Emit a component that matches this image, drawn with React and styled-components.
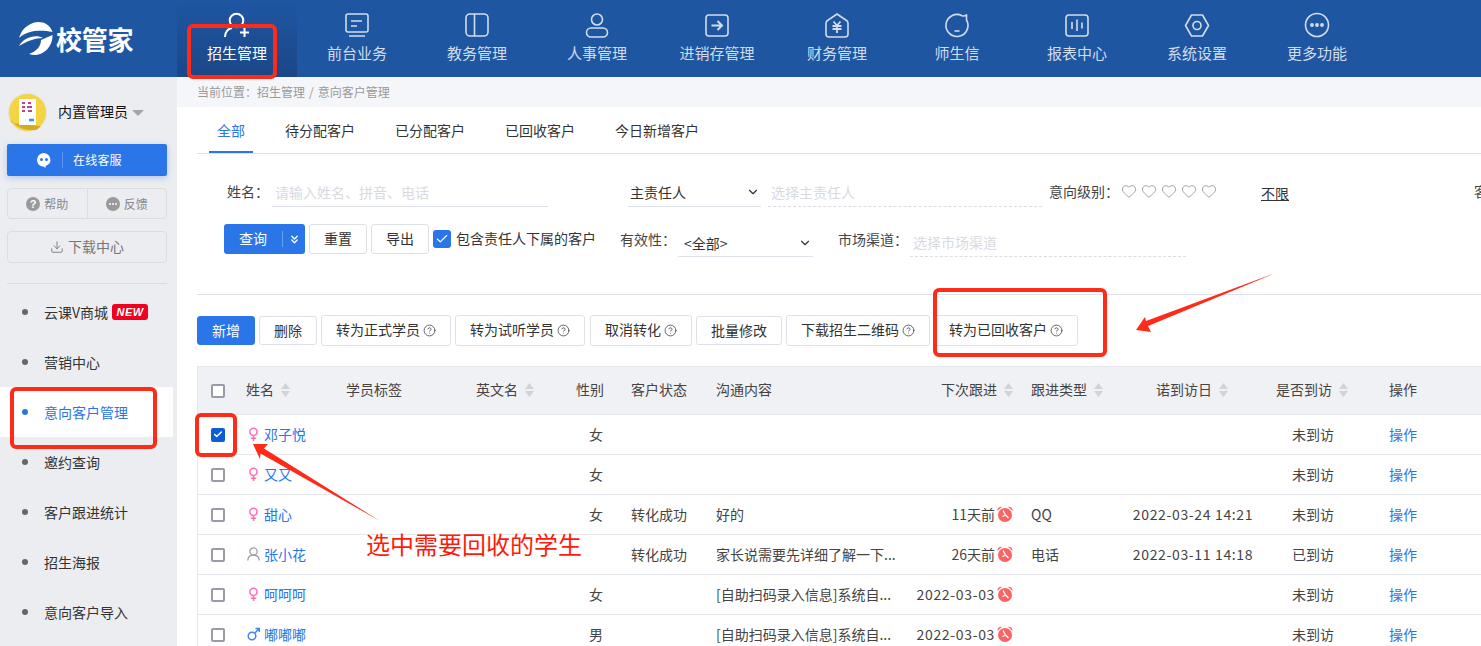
import React from "react";
import styled, { createGlobalStyle } from "styled-components";
import { Check, ChevronDown, ChevronsDown, CircleHelp, Download, Heart } from "lucide-react";

const BLUE = "#2a75e8";
const LINE = "#dfe1e8";

const GlobalStyle = createGlobalStyle`
  html, body {
    margin: 0;
    height: 100%;
    overflow: hidden;
    background: #fff;
  }
  body {
    font-family: "Noto Sans CJK SC", "Liberation Sans", sans-serif;
    font-size: 14px;
    color: #333;
  }
  * { box-sizing: border-box; }
`;

const NavIcon = ({ name }) => {
  const shapes = {
    enroll: (
      <>
        <circle cx="11.500" cy="7.500" r="6.800" strokeWidth="2" />
        <path d="M0 24c0-5 3-8 7-9M15 19.500h9M19.500 15v9" strokeWidth="2" />
      </>
    ),
    desk: (
      <>
        <rect x="1" y="1" width="22" height="18" rx="2" />
        <path d="M4 23h16M6 8h11M6 13h6" />
      </>
    ),
    edu: (
      <>
        <rect x="1" y="1" width="22" height="22" rx="4" />
        <path d="M9.500 1v22" />
      </>
    ),
    hr: (
      <>
        <circle cx="12" cy="6.500" r="5.500" />
        <rect x="1.500" y="15" width="21" height="9" rx="4.500" />
      </>
    ),
    stock: (
      <>
        <rect x="1" y="2" width="22" height="21" rx="3" />
        <path d="M6.500 12.500h10M12.500 8l4.500 4.500-4.500 4.500" strokeWidth="2" />
      </>
    ),
    money: (
      <>
        <path d="M12 1l9.500 6.500c1 .7 1.500 1.500 1.500 2.700V21c0 1.700-1 3-3 3H4c-2 0-3-1.300-3-3V10.200c0-1.200.5-2 1.500-2.700z" />
        <path d="M8.500 8.500L12 12.500l3.500-4M7.500 13h9M7.500 16h9M12 12.500V20" strokeWidth="1.800" />
      </>
    ),
    chat: (
      <>
        <path d="M21.500 7A11 11 0 1 1 17 2.700C18.500 3.200 20 3 21.500 1.800z" strokeLinejoin="round" />
        <path d="M9.500 18h5" />
      </>
    ),
    report: (
      <>
        <rect x="1" y="2" width="22" height="21" rx="3" />
        <path d="M7 9v7M12 6.500v11.500M17 9.500v6" />
      </>
    ),
    setting: (
      <>
        <path d="M6.500 2h11L23.500 12.500 17.500 23h-11L.5 12.500z" strokeLinejoin="round" />
        <circle cx="12" cy="12.500" r="4" />
      </>
    ),
    more: (
      <>
        <circle cx="12" cy="12" r="11.500" />
        <circle cx="7" cy="12" r="1.100" fill="currentColor" />
        <circle cx="12" cy="12" r="1.100" fill="currentColor" />
        <circle cx="17" cy="12" r="1.100" fill="currentColor" />
      </>
    ),
  };
  return (
    <NavSvg width="24" height="24" viewBox="0 0 24 24" fill="none" stroke="currentColor" strokeWidth="1.600">
      {shapes[name]}
    </NavSvg>
  );
};

const LogoMark = () => (
  <svg width="34" height="33" viewBox="0 0 34 33" fill="#fff">
    <path d="M0 16C3 5 13 0 19 0c7 0 12 3 14.500 10C24 8.500 10 7 0 16z" />
    <path d="M0 24C5 15 17 12 24 16 16 16 8 19 0 24z" />
    <path d="M10 32c8-3 12-8 12-14l11.500-5C34 24 25 33 16 33c-2 0-4-.3-6-1z" />
  </svg>
);

const AvatarArt = () => (
  <svg width="39" height="39" viewBox="0 0 39 39">
    <circle cx="19.500" cy="19.500" r="19" fill="#f5d443" stroke="#e4e4e4" />
    <path d="M2 26c6 8 14 12 26 11 2-1 3-2 5-4L4 30z" fill="#d6ab22" />
    <rect x="11" y="6" width="17" height="26" fill="#fff" />
    <path d="M14 10h3M20 10h3M14 14h3M19 14h5M14 18h3M20 18h4" stroke="#c2408e" strokeWidth="2" />
    <path d="M21 27h5" stroke="#2a9fd8" strokeWidth="2.500" />
  </svg>
);

const ServiceIcon = () => (
  <svg width="16" height="16" viewBox="0 0 16 16">
    <path d="M8 1a7 7 0 0 0-7 7c0 3.800 3 6.500 6.500 6.500l2 1.500v-2c3-1 5-3.200 5-6A7 7 0 0 0 8 1z" fill="#fff" />
    <circle cx="5.500" cy="7.500" r="1.500" fill={BLUE} />
    <circle cx="10.500" cy="7.500" r="1.500" fill={BLUE} />
  </svg>
);

const FeedbackIcon = () => (
  <svg width="14" height="14" viewBox="0 0 14 14">
    <circle cx="7" cy="7" r="7" fill="#999" />
    <circle cx="4" cy="7" r="1" fill="#fff" />
    <circle cx="7" cy="7" r="1" fill="#fff" />
    <circle cx="10" cy="7" r="1" fill="#fff" />
  </svg>
);

const GenderIcon = ({ type }) => {
  if (type === "male") {
    return (
      <svg width="13" height="14" viewBox="0 0 13 14" fill="none" stroke="#3f87e6" strokeWidth="1.500">
        <circle cx="5" cy="9" r="3.800" />
        <path d="M8 6l4-4.500M8.500 1.500H12.300V5" />
      </svg>
    );
  }
  if (type === "user") {
    return (
      <svg width="13" height="14" viewBox="0 0 13 14" fill="none" stroke="#9a9aa5" strokeWidth="1.200">
        <circle cx="6.500" cy="4.500" r="3.600" />
        <path d="M.8 13.500c0-3.500 2.500-5.400 5.700-5.400s5.700 1.900 5.700 5.400" />
      </svg>
    );
  }
  return (
    <svg width="13" height="14" viewBox="0 0 13 14" fill="none" stroke="#ff6db4" strokeWidth="1.500">
      <circle cx="6.500" cy="4.800" r="3.600" />
      <path d="M6.500 8.500V14M3.800 11.300h5.400" />
    </svg>
  );
};

const AlarmIcon = () => (
  <svg width="16" height="16" viewBox="0 0 16 16">
    <circle cx="8" cy="9" r="7" fill="#fa6464" />
    <path d="M.2 5C.4 2 2.500.4 5.200.8zM15.800 5C15.600 2 13.500.4 10.800.8z" fill="#fa6464" />
    <path d="M6 4.500L8.500 9l3 3M8.500 9L5.500 10.500" stroke="#fff" strokeWidth="1.300" fill="none" />
  </svg>
);

const SortIcon = () => (
  <SortMark width="9" height="14" viewBox="0 0 9 14">
    <path d="M4.500 0L9 6H0zM4.500 14L0 8h9z" fill="#d2d3d8" />
  </SortMark>
);

const Annotations = () => (
  <Overlay width="1481" height="646" viewBox="0 0 1481 646">
    <polygon points="253,444 268,444 264,448.400 380,521 260.500,453.600 260,459" fill="#ff2a17" />
    <polygon points="1136,330 1145,317 1146,321 1273,274 1148,326 1151,332" fill="#ff2a17" />
  </Overlay>
);

const navItems = [
  ["enroll", "招生管理"],
  ["desk", "前台业务"],
  ["edu", "教务管理"],
  ["hr", "人事管理"],
  ["stock", "进销存管理"],
  ["money", "财务管理"],
  ["chat", "师生信"],
  ["report", "报表中心"],
  ["setting", "系统设置"],
  ["more", "更多功能"],
];

const menuItems = ["云课V商城", "营销中心", "意向客户管理", "邀约查询", "客户跟进统计", "招生海报", "意向客户导入"];
const tabs = ["全部", "待分配客户", "已分配客户", "已回收客户", "今日新增客户"];
const SCAN = "[自助扫码录入信息]系统自...";

const rows = [
  { name: "邓子悦", gender: "female", sex: "女", visit: "未到访", checked: true },
  { name: "又又", gender: "female", sex: "女", visit: "未到访" },
  { name: "甜心", gender: "female", sex: "女", status: "转化成功", note: "好的", next: "11天前", type: "QQ", date: "2022-03-24 14:21", visit: "未到访" },
  { name: "张小花", gender: "user", status: "转化成功", note: "家长说需要先详细了解一下...", next: "26天前", type: "电话", date: "2022-03-11 14:18", visit: "已到访" },
  { name: "呵呵呵", gender: "female", sex: "女", note: SCAN, next: "2022-03-03", nextIsDate: true, visit: "未到访" },
  { name: "嘟嘟嘟", gender: "male", sex: "男", note: SCAN, next: "2022-03-03", nextIsDate: true, visit: "未到访" },
];

const colWidths = [38, 100, 130, 100, 55, 85, 205, 110, 99, 146, 92, 124];

const actions = [
  { label: "新增", primary: true },
  { label: "删除" },
  { label: "转为正式学员", help: true },
  { label: "转为试听学员", help: true },
  { label: "取消转化", help: true, gapLeft: 1 },
  { label: "批量修改" },
  { label: "下载招生二维码", help: true },
  { label: "转为已回收客户", help: true },
];

export default function App() {
  return (
    <Page>
      <GlobalStyle />
      <Header>
        <LogoBox>
          <LogoMark />
          <LogoText>校管家</LogoText>
        </LogoBox>
        <Nav>
          {navItems.map(([icon, label], i) => (
            <NavItem key={label} $active={i === 0}>
              <NavIcon name={icon} />
              <NavLabel>{label}</NavLabel>
            </NavItem>
          ))}
        </Nav>
      </Header>

      <Body>
        <Sidebar>
          <UserRow>
            <AvatarArt />
            <UserName>内置管理员</UserName>
            <Caret />
          </UserRow>
          <ServiceButton>
            <ServiceIcon />
            <ServiceDivider />
            <ServiceText>在线客服</ServiceText>
          </ServiceButton>
          <HelpGroup>
            <HelpItem>
              <HelpDot>?</HelpDot>帮助
            </HelpItem>
            <HelpItem>
              <FeedbackIcon />反馈
            </HelpItem>
          </HelpGroup>
          <DownloadButton>
            <Download size={14} strokeWidth={1.500} />
            <DownloadText>下载中心</DownloadText>
          </DownloadButton>
          <SideDivider />
          <Menu>
            {menuItems.map((item, i) => (
              <MenuItem key={item} $active={i === 2}>
                <MenuDot $active={i === 2} />
                {item}
                {i === 0 && <NewBadge>NEW</NewBadge>}
              </MenuItem>
            ))}
          </Menu>
        </Sidebar>

        <Main>
          <Breadcrumb>
            当前位置：招生管理<Slash>/</Slash>意向客户管理
          </Breadcrumb>
          <Content>
            <Tabs>
              {tabs.map((tab, i) => (
                <Tab key={tab} $active={i === 0}>
                  {tab}
                </Tab>
              ))}
            </Tabs>

            <FilterRow>
              <FieldLabel $width={45}>姓名：</FieldLabel>
              <TextField $width={276} placeholder="请输入姓名、拼音、电话" readOnly />
              <SelectField $width={133} $pad={2} $left={80}>
                主责任人
                <ChevronDown size={14} strokeWidth={2} />
              </SelectField>
              <TextField $width={274} $dashed $left={7} placeholder="选择主责任人" readOnly />
              <FieldLabel $width={72} $left={7}>意向级别：</FieldLabel>
              <Hearts>
                {[0, 1, 2, 3, 4].map((n) => (
                  <Heart key={n} size={16} strokeWidth={1} color="#777" />
                ))}
              </Hearts>
              <Unlimited>不限</Unlimited>
              <FieldLabel $width={60} $left={185}>客户</FieldLabel>
            </FilterRow>

            <QueryRow>
              <SplitButton>
                <SplitMain>查询</SplitMain>
                <SplitArrow>
                  <ChevronsDown size={13} strokeWidth={2.500} />
                </SplitArrow>
              </SplitButton>
              <PlainButton>重置</PlainButton>
              <PlainButton>导出</PlainButton>
              <CheckBadge>
                <Check size={14} strokeWidth={2} />
              </CheckBadge>
              <CheckLabel>包含责任人下属的客户</CheckLabel>
              <LowerFields>
                <FieldLabel $width={58}>有效性：</FieldLabel>
                <SelectField $width={135} $pad={6} $low>
                  &lt;全部&gt;
                  <ChevronDown size={14} strokeWidth={2} />
                </SelectField>
                <FieldLabel $width={72} $left={25}>市场渠道：</FieldLabel>
                <TextField $width={276} $dashed placeholder="选择市场渠道" readOnly />
              </LowerFields>
            </QueryRow>

            <SectionLine />

            <Toolbar>
              {actions.map((a) => (
                <ToolButton key={a.label} $primary={a.primary} $help={a.help} $left={a.gapLeft}>
                  {a.label}
                  {a.help && <CircleHelp size={13} strokeWidth={1.500} color="#444" />}
                </ToolButton>
              ))}
            </Toolbar>

            <Table>
              <colgroup>
                {colWidths.map((w, i) => (
                  <col key={i} width={w} />
                ))}
              </colgroup>
              <thead>
                <tr>
                  <Th>
                    <Box />
                  </Th>
                  <Th>姓名<SortIcon /></Th>
                  <Th>学员标签</Th>
                  <Th>英文名<SortIcon /></Th>
                  <Th>性别</Th>
                  <Th>客户状态</Th>
                  <Th>沟通内容</Th>
                  <Th $align="right">下次跟进<SortIcon /></Th>
                  <Th>跟进类型<SortIcon /></Th>
                  <Th $indent={36}>诺到访日<SortIcon /></Th>
                  <Th>是否到访<SortIcon /></Th>
                  <Th $indent={31}>操作</Th>
                </tr>
              </thead>
              <tbody>
                {rows.map((r) => (
                  <tr key={r.name}>
                    <Td>
                      <Box $checked={r.checked}>
                        {r.checked && <Check size={11} strokeWidth={3.500} color="#fff" />}
                      </Box>
                    </Td>
                    <Td>
                      <NameCell>
                        <GenderIcon type={r.gender} />
                        <NameLink>{r.name}</NameLink>
                      </NameCell>
                    </Td>
                    <Td />
                    <Td />
                    <Td $align="right">{r.sex}</Td>
                    <Td>{r.status}</Td>
                    <Td>{r.note}</Td>
                    <Td $align="right">
                      {r.next && (
                        <NextCell>
                          {r.nextIsDate ? <Num>{r.next}</Num> : r.next}
                          <AlarmIcon />
                        </NextCell>
                      )}
                    </Td>
                    <Td>{r.type}</Td>
                    <Td $align="center">
                      <Num>{r.date}</Num>
                    </Td>
                    <Td $align="center">
                      <VisitText>{r.visit}</VisitText>
                    </Td>
                    <Td $indent={31}>
                      <NameLink>操作</NameLink>
                    </Td>
                  </tr>
                ))}
              </tbody>
            </Table>
          </Content>
        </Main>
      </Body>

      <RedBox $x={187} $y={24} $w={90} $h={55} />
      <RedBox $x={10} $y={387} $w={147} $h={62} />
      <RedBox $x={195} $y={413} $w={42} $h={44} />
      <RedBox $x={933} $y={288} $w={174} $h={69} />
      <Annotations />
      <RedNote>选中需要回收的学生</RedNote>
    </Page>
  );
}

const Page = styled.div`
  position: relative;
  width: 1481px;
  height: 646px;
  overflow: hidden;
`;

const Header = styled.header`
  display: flex;
  height: 77px;
  background: #1f56a2;
`;

const LogoBox = styled.div`
  display: flex;
  align-items: center;
  gap: 3px;
  width: 177px;
  padding: 0 0 0 19px;
`;

const LogoText = styled.span`
  color: #fff;
  font-size: 26px;
  font-weight: 700;
  line-height: 1;
  letter-spacing: -0.3px;
`;

const Nav = styled.nav`
  display: flex;
`;

const NavItem = styled.div`
  display: flex;
  flex-direction: column;
  align-items: center;
  width: 120px;
  padding-top: 13px;
  color: ${(p) => (p.$active ? "#fff" : "#d3dcec")};
  background: ${(p) => (p.$active ? "linear-gradient(#1f56a2, #1b4787)" : "none")};
`;

const NavSvg = styled.svg`
  flex: none;
  overflow: visible;
`;

const NavLabel = styled.span`
  margin-top: 6px;
  font-size: 15px;
  line-height: 20px;
  white-space: nowrap;
`;

const Body = styled.div`
  display: flex;
  height: 569px;
`;

const Sidebar = styled.aside`
  flex: none;
  width: 177px;
  padding-top: 16px;
  background: #ecedf1;
`;

const UserRow = styled.div`
  display: flex;
  align-items: center;
  height: 39px;
  padding-left: 8px;
`;

const UserName = styled.span`
  margin: 0 0 4px 11px;
  font-size: 14px;
  color: #111;
`;

const Caret = styled.i`
  margin: 0 0 0 4px;
  border-style: solid;
  border-width: 6px 6px 0;
  border-color: #a5a5a9 transparent transparent;
`;

const ServiceButton = styled.div`
  display: flex;
  align-items: center;
  width: 160px;
  height: 32px;
  margin: 12px 0 0 7px;
  padding-left: 29px;
  color: #fff;
  background: ${BLUE};
  border-radius: 2px;
  box-shadow: 0 2px 6px rgba(42, 117, 232, 0.3);
`;

const ServiceDivider = styled.i`
  width: 1px;
  height: 16px;
  margin: 0 10px;
  background: rgba(255, 255, 255, 0.25);
`;

const ServiceText = styled.span`
  margin-bottom: 2px;
  font-size: 12px;
  letter-spacing: 0.2px;
`;

const HelpGroup = styled.div`
  display: flex;
  width: 160px;
  height: 31px;
  margin: 12px 0 0 7px;
  border: 1px solid #dcdde2;
  border-radius: 4px;
`;

const HelpItem = styled.div`
  flex: 1;
  display: flex;
  align-items: center;
  justify-content: center;
  gap: 4px;
  font-size: 12px;
  color: #888;

  & + & {
    border-left: 1px solid #dcdde2;
  }
`;

const HelpDot = styled.i`
  width: 14px;
  height: 14px;
  border-radius: 50%;
  background: #999;
  color: #fff;
  font: 700 11px/14px "Liberation Sans", sans-serif;
  text-align: center;
`;

const DownloadButton = styled.div`
  display: flex;
  align-items: center;
  justify-content: center;
  gap: 4px;
  width: 160px;
  height: 32px;
  margin: 12px 0 0 7px;
  border: 1px solid #dcdde2;
  border-radius: 4px;
  color: #777;
`;

const DownloadText = styled.span`
  margin-bottom: 2px;
  font-size: 14px;
`;

const SideDivider = styled.div`
  width: 160px;
  height: 1px;
  margin: 20px 0 3px 7px;
  background: #dcdde2;
`;

const Menu = styled.ul`
  width: 173px;
  margin: 0;
  padding: 0;
  list-style: none;
`;

const MenuItem = styled.li`
  display: flex;
  align-items: center;
  height: 50px;
  padding-left: 22px;
  font-size: 14px;
  color: ${(p) => (p.$active ? BLUE : "#333")};
  background: ${(p) => (p.$active ? "#fff" : "none")};
`;

const MenuDot = styled.i`
  width: 6px;
  height: 6px;
  margin-right: 16px;
  border-radius: 50%;
  background: ${(p) => (p.$active ? BLUE : "#666")};
`;

const NewBadge = styled.span`
  width: 36px;
  height: 16px;
  margin-left: 4px;
  border-radius: 3px;
  background: #f0001e;
  color: #fff;
  font: italic 700 11px/16px "Liberation Sans", sans-serif;
  letter-spacing: 0.5px;
  text-align: center;
`;

const Main = styled.main`
  flex: 1;
  min-width: 0;
  overflow: hidden;
`;

const Breadcrumb = styled.div`
  height: 30px;
  padding-left: 20px;
  font-size: 12px;
  line-height: 30px;
  color: #999;
  background: #f5f6fa;
`;

const Slash = styled.span`
  margin: 0 4px;
`;

const Content = styled.div`
  padding-left: 20px;
`;

const Tabs = styled.div`
  display: flex;
  height: 47px;
  padding-left: 12px;
  border-bottom: 1px solid ${LINE};
`;

const Tab = styled.div`
  height: 46px;
  margin-right: 24px;
  padding: 0 8px;
  font-size: 14px;
  line-height: 46px;
  color: ${(p) => (p.$active ? BLUE : "#333")};
  border-bottom: 2px solid ${(p) => (p.$active ? BLUE : "transparent")};
`;

const FilterRow = styled.div`
  display: flex;
  align-items: center;
  height: 29px;
  margin-top: 24px;
  padding-left: 30px;
  white-space: nowrap;
`;

const FieldLabel = styled.span`
  flex: none;
  width: ${(p) => p.$width}px;
  margin-left: ${(p) => p.$left || 0}px;
  margin-top: -3px;
  font-size: 14px;
  color: #444;
`;

const TextField = styled.input`
  flex: none;
  width: ${(p) => p.$width}px;
  height: 29px;
  margin-left: ${(p) => p.$left || 0}px;
  padding: 0 3px;
  border: 0;
  border-bottom: 1px ${(p) => (p.$dashed ? "dashed #dcdde2" : `solid ${LINE}`)};
  outline: 0;
  font: inherit;
  font-size: 14px;

  &::placeholder {
    color: #d9dae0;
  }
`;

const SelectField = styled.div`
  flex: none;
  display: flex;
  align-items: center;
  justify-content: space-between;
  width: ${(p) => p.$width}px;
  height: 29px;
  margin-left: ${(p) => p.$left || 0}px;
  padding: ${(p) => (p.$low ? 2 : 0)}px 1px 0 ${(p) => p.$pad}px;
  border-bottom: 1px solid ${LINE};
  font-size: 14px;
  color: #333;
`;

const Hearts = styled.div`
  display: flex;
  gap: 4px;
  margin-bottom: 3px;
`;

const Unlimited = styled.span`
  flex: none;
  margin: 0 0 0 44px;
  font-size: 14px;
  color: #333;
  text-decoration: underline;
`;

const QueryRow = styled.div`
  display: flex;
  gap: 4px;
  height: 33px;
  margin-top: 17px;
  padding-left: 27px;
  white-space: nowrap;
`;

const SplitButton = styled.div`
  display: flex;
  align-items: center;
  width: 81px;
  height: 30px;
  border-radius: 3px;
  color: #fff;
  background: ${BLUE};
`;

const SplitMain = styled.span`
  width: 59px;
  height: 16px;
  font-size: 14px;
  line-height: 14px;
  text-align: center;
  border-right: 1px solid rgba(255, 255, 255, 0.3);
`;

const SplitArrow = styled.span`
  display: flex;
  justify-content: center;
  width: 22px;
`;

const PlainButton = styled.div`
  width: 58px;
  height: 30px;
  border: 1px solid ${LINE};
  border-radius: 3px;
  font-size: 14px;
  line-height: 26px;
  text-align: center;
  color: #333;
`;

const CheckBadge = styled.span`
  display: flex;
  align-items: center;
  justify-content: center;
  width: 18px;
  height: 18px;
  margin-top: 6px;
  border-radius: 3px;
  color: #fff;
  background: ${BLUE};
`;

const CheckLabel = styled.span`
  margin-left: 1px;
  font-size: 14px;
  line-height: 28px;
  color: #333;
`;

const LowerFields = styled.div`
  display: flex;
  align-items: flex-end;
  height: 33px;
  margin-left: 20px;

  ${FieldLabel} {
    margin-top: 0;
    line-height: 36px;
  }
`;

const SectionLine = styled.div`
  height: 1px;
  margin-top: 37px;
  background: ${LINE};
`;

const Toolbar = styled.div`
  display: flex;
  align-items: center;
  gap: 4px;
  height: 31px;
  margin-top: 20px;
`;

const ToolButton = styled.div`
  display: flex;
  align-items: center;
  justify-content: center;
  gap: 3px;
  height: ${(p) => (p.$help ? 31 : 29)}px;
  margin-left: ${(p) => p.$left || 0}px;
  padding: 0 14px ${(p) => (p.$help ? 3 : 1)}px;
  border: 1px solid ${(p) => (p.$primary ? BLUE : LINE)};
  border-radius: 3px;
  font-size: 14px;
  color: ${(p) => (p.$primary ? "#fff" : "#333")};
  background: ${(p) => (p.$primary ? BLUE : "#fff")};

  svg {
    margin-top: 2px;
  }
`;

const Table = styled.table`
  width: 100%;
  margin-top: 20px;
  table-layout: fixed;
  border-collapse: separate;
  border-spacing: 0;
  border-left: 1px solid #e6e7ec;
`;

const Th = styled.th`
  height: 49px;
  padding: 0 ${(p) => (p.$align === "right" ? 8 : 0)}px 3px ${(p) => p.$indent ?? 10}px;
  border-top: 1px solid #e6e7ec;
  border-bottom: 1px solid #e6e7ec;
  font-size: 14px;
  font-weight: 400;
  color: #444;
  text-align: ${(p) => p.$align || "left"};
  white-space: nowrap;
  background: #f0f1f5;

  &:first-child {
    padding: 0 0 0 13px;
  }
`;

const Td = styled.td`
  height: 40px;
  padding: 0 ${(p) => (p.$align === "right" ? 18 : 0)}px 2px ${(p) => (p.$align ? 0 : p.$indent ?? 10)}px;
  border-bottom: 1px solid #e6e7ec;
  font-size: 14px;
  color: #444;
  text-align: ${(p) => p.$align || "left"};
  white-space: nowrap;

  &:first-child {
    padding: 0 0 0 13px;
  }
`;

const SortMark = styled.svg`
  margin-left: 7px;
  vertical-align: -2px;
`;

const Box = styled.span`
  display: flex;
  align-items: center;
  justify-content: center;
  width: 14px;
  height: 14px;
  border: 2px solid ${(p) => (p.$checked ? "#0b5ed7" : "#9a9aa8")};
  border-radius: 2px;
  background: ${(p) => (p.$checked ? "#0b5ed7" : "#fff")};
`;

const NameCell = styled.span`
  display: flex;
  align-items: center;
  gap: 4px;
  margin-left: 1px;
`;

const NameLink = styled.span`
  color: ${BLUE};
`;

const NextCell = styled.span`
  display: inline-flex;
  align-items: center;
  justify-content: flex-end;
  gap: 2px;
  margin-right: -10px;
`;

const Num = styled.span`
  letter-spacing: 0.65px;
`;

const VisitText = styled.span`
  margin-left: 2px;
`;

const RedBox = styled.div`
  position: absolute;
  left: ${(p) => p.$x}px;
  top: ${(p) => p.$y}px;
  width: ${(p) => p.$w}px;
  height: ${(p) => p.$h}px;
  border: 4px solid #ff2a17;
  border-radius: 6px;
`;

const Overlay = styled.svg`
  position: absolute;
  left: 0;
  top: 0;
  pointer-events: none;
`;

const RedNote = styled.div`
  position: absolute;
  left: 366px;
  top: 526px;
  font-size: 24px;
  line-height: 36px;
  color: #ff1a0a;
  white-space: nowrap;
`;
